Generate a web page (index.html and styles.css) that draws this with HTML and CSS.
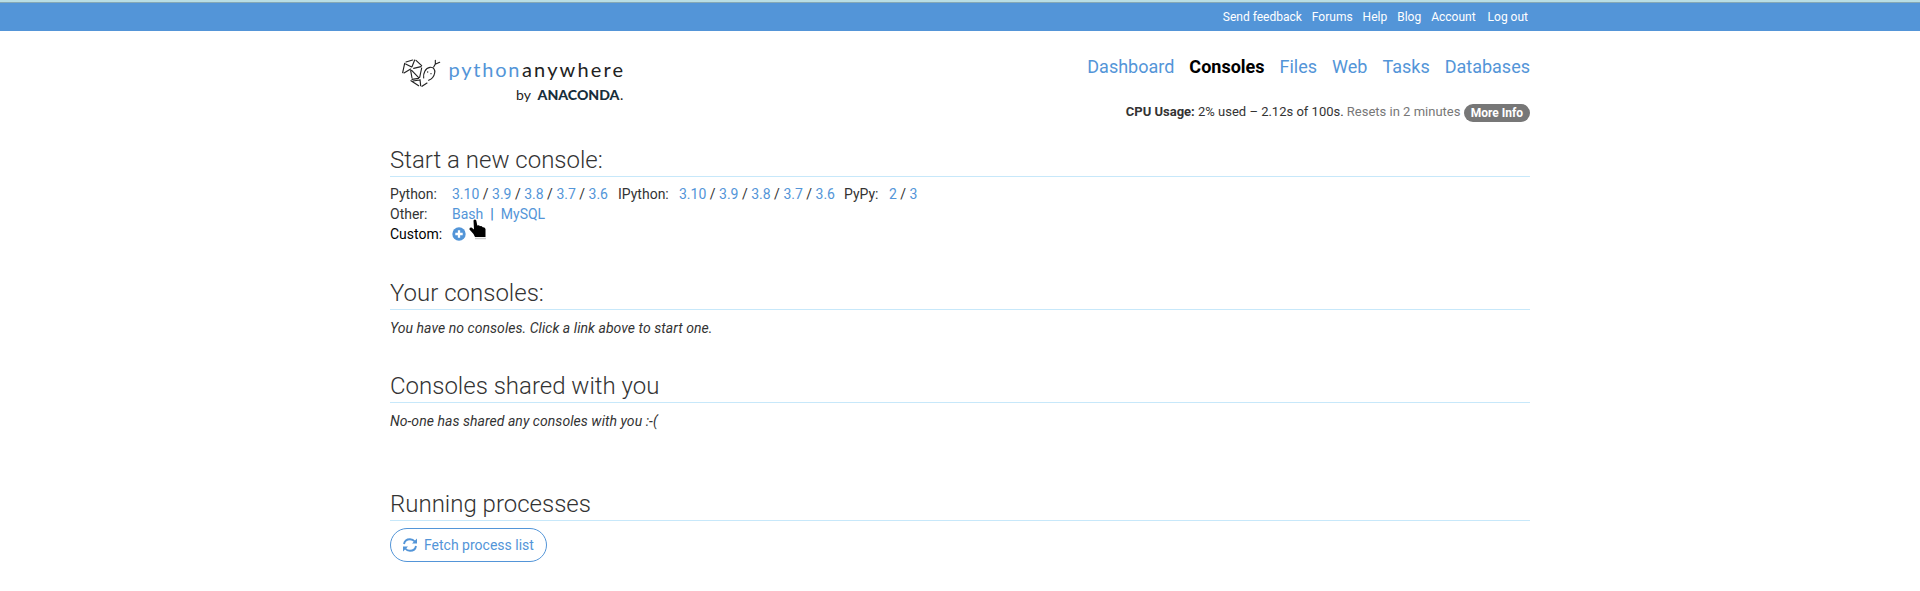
FILE: index.html
```html
<!DOCTYPE html>
<html lang="en">
<head>
<meta charset="utf-8">
<title>Consoles : PythonAnywhere</title>
<link rel="stylesheet" href="styles.css">
</head>
<body>
<div class="topbar"><nav class="container top-links"><a href="#">Send feedback</a><a href="#">Forums</a><a href="#">Help</a><a href="#">Blog</a><a href="#">Account</a><a class="logout" href="#">Log out</a></nav></div>
<div class="container">
<header class="header">
<svg class="logo" width="250" height="70" viewBox="0 0 250 70" role="img" aria-label="PythonAnywhere by Anaconda">
<g transform="translate(-10 -10) scale(.33333)" fill="none" stroke="#222" stroke-width="3.400" stroke-linecap="round">
<path d="M74 70l-6 28M78 66l20-6M77 72l18 9M72 99l20-12M104 60l-8 20M108 61l17 16M101 85l22-5M92 92l4 22M95 91l21 22M125 84l-6 28M96 118l20-3M93 122l23 15M99 123l20-3M120 119l2 18M126 139l15-10"/>
<path d="M131 114c-2-14 5-30 19-32 11-1 16 7 14 17-2 11-8 18-18 22M161 81l5-9v-11M167 72l12-5"/>
<circle cx="143" cy="96" r="2" fill="#222" stroke="none"/><circle cx="153" cy="101" r="2" fill="#222" stroke="none"/>
</g>
<text class="logo-word" y="26.500"><tspan x="58.500" fill="#5395d8" textLength="71" lengthAdjust="spacing">python</tspan><tspan x="132" fill="#222" textLength="101" lengthAdjust="spacing">anywhere</tspan></text>
<text class="logo-by" x="126" y="49.500" textLength="15">by</text>
<text class="logo-anaconda" x="147.500" y="49.500" textLength="82" lengthAdjust="spacingAndGlyphs">ANACONDA</text>
<text class="logo-by" x="230" y="49.500">.</text>
</svg>
<div class="header-right">
<nav class="tabs"><a href="#">Dashboard</a><a class="active" href="#">Consoles</a><a href="#">Files</a><a href="#">Web</a><a href="#">Tasks</a><a href="#">Databases</a></nav>
<div class="cpu"><b>CPU Usage:</b> 2% used – 2.12s of 100s. <span class="muted">Resets in 2 minutes</span> <span class="badge">More Info</span></div>
</div>
</header>
<main>
<section class="start">
<h2>Start a new console:</h2>
<div class="console-types">
<span>Python:</span><span><a href="#">3.10</a> / <a href="#">3.9</a> / <a href="#">3.8</a> / <a href="#">3.7</a> / <a href="#">3.6</a></span>
<span>IPython:</span><span><a href="#">3.10</a> / <a href="#">3.9</a> / <a href="#">3.8</a> / <a href="#">3.7</a> / <a href="#">3.6</a></span>
<span>PyPy:</span><span><a href="#">2</a> / <a href="#">3</a></span>
<span class="row-label">Other:</span><span class="other"><a class="bash" href="#">Bash<svg class="pointer" width="20" height="22" viewBox="0 0 20 22"><path d="M7 19.500H18" stroke="#ccc" stroke-width="1.500"/><path d="M5.500 1.500Q7-.5 8.300 1.500L9.300 6.500Q11 5.500 12 7.200 13.500 6.500 14.700 8.300 17 8 17.500 10L17.500 18H7L5.500 15 1.500 10.500Q1 8.500 3.500 8.500L6 10.500Z" fill="#000"/></svg></a><span class="divider">|</span><a href="#">MySQL</a></span>
<span class="row-label custom">Custom:</span><a class="add" href="#"><svg width="14" height="14" viewBox="0 0 14 14"><circle cx="7" cy="7" r="6.700" fill="#5395d8"/><path d="M7 3.300v7.400M3.300 7h7.400" stroke="#fff" stroke-width="2.300"/></svg></a>
</div>
</section>
<section class="yours"><h2>Your consoles:</h2><p>You have no consoles. Click a link above to start one.</p></section>
<section class="shared"><h2>Consoles shared with you</h2><p>No-one has shared any consoles with you :-(</p></section>
<section><h2>Running processes</h2>
<button class="fetch"><svg width="14" height="14" viewBox="0 0 14 14"><g fill="none" stroke="#5395d8" stroke-width="1.900"><path d="M1 6C1.500 3 4 1.200 7 1.200c2.200 0 3.600.8 4.800 2.300M13 8c-.5 3-3 4.800-6 4.800-2.200 0-3.600-.8-4.800-2.300"/></g><path d="M14 .5V5.500H9ZM0 13.500V8.500H5Z" fill="#5395d8"/></svg><span>Fetch process list</span></button>
</section>
</main>
</div>
</body>
</html>
```
FILE: styles.css
```css
* { box-sizing: border-box; }
body { margin: 0; background: #fff; color: #333; font: 14px/20px Roboto, sans-serif; }
a { color: #5395d8; text-decoration: none; }
.container { width: 1140px; margin: 0 auto; }
.topbar { height: 31px; background: #5395d8; border-top: 2px solid #b9dee4; box-shadow: inset 0 1px #86a9b5; }
.top-links { display: flex; justify-content: flex-end; gap: 10px; padding: 5px 2px 0 0; font-size: 12px; }
.top-links a { color: #fff; }
.logout { margin-left: 2px; }
.header { height: 112px; display: flex; justify-content: space-between; padding-top: 19px; }
.logo-word { font: 20px Lato, sans-serif; }
.logo-by { font: 14px Lato, sans-serif; fill: #222; }
.logo-anaconda { font: 900 14px Lato, sans-serif; fill: #172e3c; }
.header-right { display: flex; flex-direction: column; align-items: flex-end; }
.tabs { display: flex; gap: 15px; padding-top: 6px; font-size: 18px; line-height: 22px; }
.tabs .active { color: #000; font-weight: 700; }
.cpu { margin-top: 24px; font-size: 13px; }
.muted { color: #777; }
.badge { display: inline-block; height: 18px; padding: 3px 7px; border-radius: 10px; background: #777; color: #fff; font-weight: 700; font-size: 12px; line-height: 12px; vertical-align: middle; }
h2 { height: 34px; margin: 0 0 7px; border-bottom: 1px solid #c7e8fa; font-size: 24px; font-weight: 300; line-height: 34px; }
.start { height: 133px; }
.console-types { display: grid; grid-template-columns: 62px 166px 61px 165px 45px 1fr; grid-auto-rows: 20px; white-space: nowrap; }
.row-label { grid-column: 1; }
.other, .add { grid-column: 2; }
.custom { color: #000; }
.bash { position: relative; }
.pointer { position: absolute; left: 16px; top: 13px; z-index: 1; }
.divider { margin: 0 7px; color: #3f84cc; font-weight: 700; }
.add svg { display: block; margin-top: 3px; }
.yours { height: 93px; }
.shared { height: 118px; }
p { margin: 0; padding-top: 1px; font-style: italic; letter-spacing: .05px; }
.fetch { display: flex; align-items: center; gap: 7px; width: 157px; height: 34px; padding: 0 12px; border: 1px solid #5395d8; border-radius: 17px; background: #fff; color: #5395d8; font: 14px/20px Roboto, sans-serif; white-space: nowrap; }
```
